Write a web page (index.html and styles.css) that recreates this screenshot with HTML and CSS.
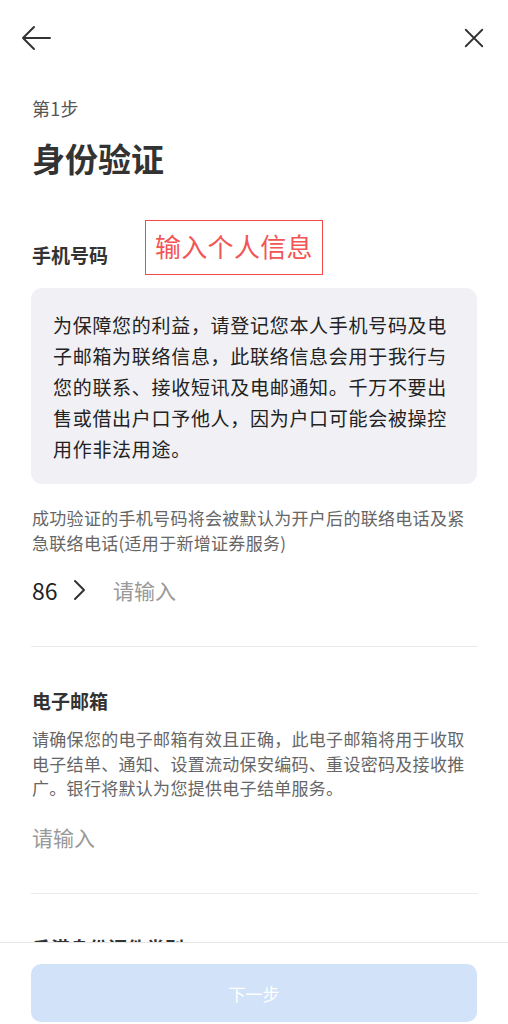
FILE: index.html
```html
<!DOCTYPE html>
<html lang="zh-CN">
<head>
<meta charset="utf-8">
<title>身份验证</title>
<link rel="stylesheet" href="styles.css">
</head>
<body>
<div class="page">
  <header class="topbar">
    <svg class="icon back" width="32" height="28" viewBox="0 0 32 28"><path d="M30 14H3M14 3L3 14l11 11" fill="none" stroke="#333" stroke-width="2" stroke-linecap="round" stroke-linejoin="round"/></svg>
    <svg class="icon close" width="24" height="24" viewBox="0 0 24 24"><path d="M3 3l18 18M21 3L3 21" fill="none" stroke="#333" stroke-width="2" stroke-linecap="round"/></svg>
  </header>
  <main class="content">
    <div class="step">第1步</div>
    <h1 class="title">身份验证</h1>

    <div class="label-row">
      <h2 class="label">手机号码</h2>
      <div class="annotation">输入个人信息</div>
    </div>
    <div class="info-box">为保障您的利益，请登记您本人手机号码及电子邮箱为联络信息，此联络信息会用于我行与您的联系、接收短讯及电邮通知。千万不要出售或借出户口予他人，因为户口可能会被操控用作非法用途。</div>
    <p class="note">成功验证的手机号码将会被默认为开户后的联络电话及紧急联络电话(适用于新增证券服务)</p>
    <div class="input-row">
      <span class="code">86</span>
      <svg class="chev" width="14" height="22" viewBox="0 0 14 22"><path d="M2 2l9 9-9 9" fill="none" stroke="#333" stroke-width="2" stroke-linecap="round" stroke-linejoin="round"/></svg>
      <span class="placeholder">请输入</span>
    </div>
    <hr class="divider">

    <h2 class="label section">电子邮箱</h2>
    <p class="note desc">请确保您的电子邮箱有效且正确，此电子邮箱将用于收取电子结单、通知、设置流动保安编码、重设密码及接收推广。银行将默认为您提供电子结单服务。</p>
    <div class="input-row single">
      <span class="placeholder">请输入</span>
    </div>
    <hr class="divider">

    <h2 class="label section">香港身份证件类别</h2>
  </main>
  <footer class="footer">
    <button class="next" type="button">下一步</button>
  </footer>
</div>
</body>
</html>
```

FILE: styles.css
```css
* { box-sizing: border-box; }
html, body { margin: 0; padding: 0; }
body {
  font-family: "Noto Sans CJK SC", "Noto Sans", sans-serif;
  color: #333;
  background: #fff;
  width: 508px;
  height: 1024px;
  overflow: hidden;
}
.page { position: relative; height: 1024px; }
.topbar {
  height: 76px;
  display: flex;
  justify-content: space-between;
  align-items: center;
  padding: 0 23px 0 20px;
}
.icon { display: block; }
.close { width: 22px; height: 22px; }
.content { padding: 0 31px 0 32px; }
.step {
  font-size: 18px;
  line-height: 26px;
  margin-top: 19px;
  color: #555;
  letter-spacing: 0.3px;
}
.title {
  margin: 15px 0 0;
  font-size: 33px;
  line-height: 44px;
  font-weight: 700;
  color: #333;
}
.label-row {
  position: relative;
  margin-top: 61px;
  height: 28px;
}
.label {
  margin: 0;
  font-size: 19px;
  line-height: 28px;
  font-weight: 700;
  color: #333;
}
.annotation {
  position: absolute;
  left: 113px;
  top: -21px;
  width: 178px;
  height: 55px;
  border: 1.5px solid #f24a4a;
  color: #f25555;
  font-size: 26px;
  line-height: 50px;
  padding-left: 9px;
  letter-spacing: 0.3px;
}
.info-box {
  margin-top: 19px;
  margin-left: -1px;
  background: #f0f0f5;
  border-radius: 11px;
  padding: 21px 20px 18px 22px;
  font-size: 19px;
  line-height: 31px;
  letter-spacing: 0.7px;
  color: #222;
  height: 196px;
}
.note {
  margin: 21px 0 0;
  font-size: 17px;
  line-height: 25px;
  color: #666;
  letter-spacing: 0.3px;
}
.input-row {
  margin-top: 20px;
  height: 30px;
  display: flex;
  align-items: center;
  font-size: 23px;
}
.code { color: #222; width: 41px; }
.chev { margin-right: 26px; }
.placeholder { color: #999; font-size: 21px; }
.divider {
  border: 0;
  border-top: 1px solid #ebebeb;
  margin: 41px -1px 0 -1px;
  height: 0;
}
.section { margin-top: 40px; }
.desc { margin-top: 12px; line-height: 24.5px; }
.single { margin-top: 21px; }
.footer {
  position: absolute;
  left: 0;
  right: 0;
  bottom: 0;
  height: 82px;
  background: #fff;
  border-top: 1px solid #e6e6e6;
  padding: 21px 31px 2px;
}
.next {
  display: block;
  width: 100%;
  height: 58px;
  border: 0;
  border-radius: 10px;
  background: #d2e3f9;
  color: #fff;
  font-family: inherit;
  font-size: 17px;
  padding: 0;
}
```
